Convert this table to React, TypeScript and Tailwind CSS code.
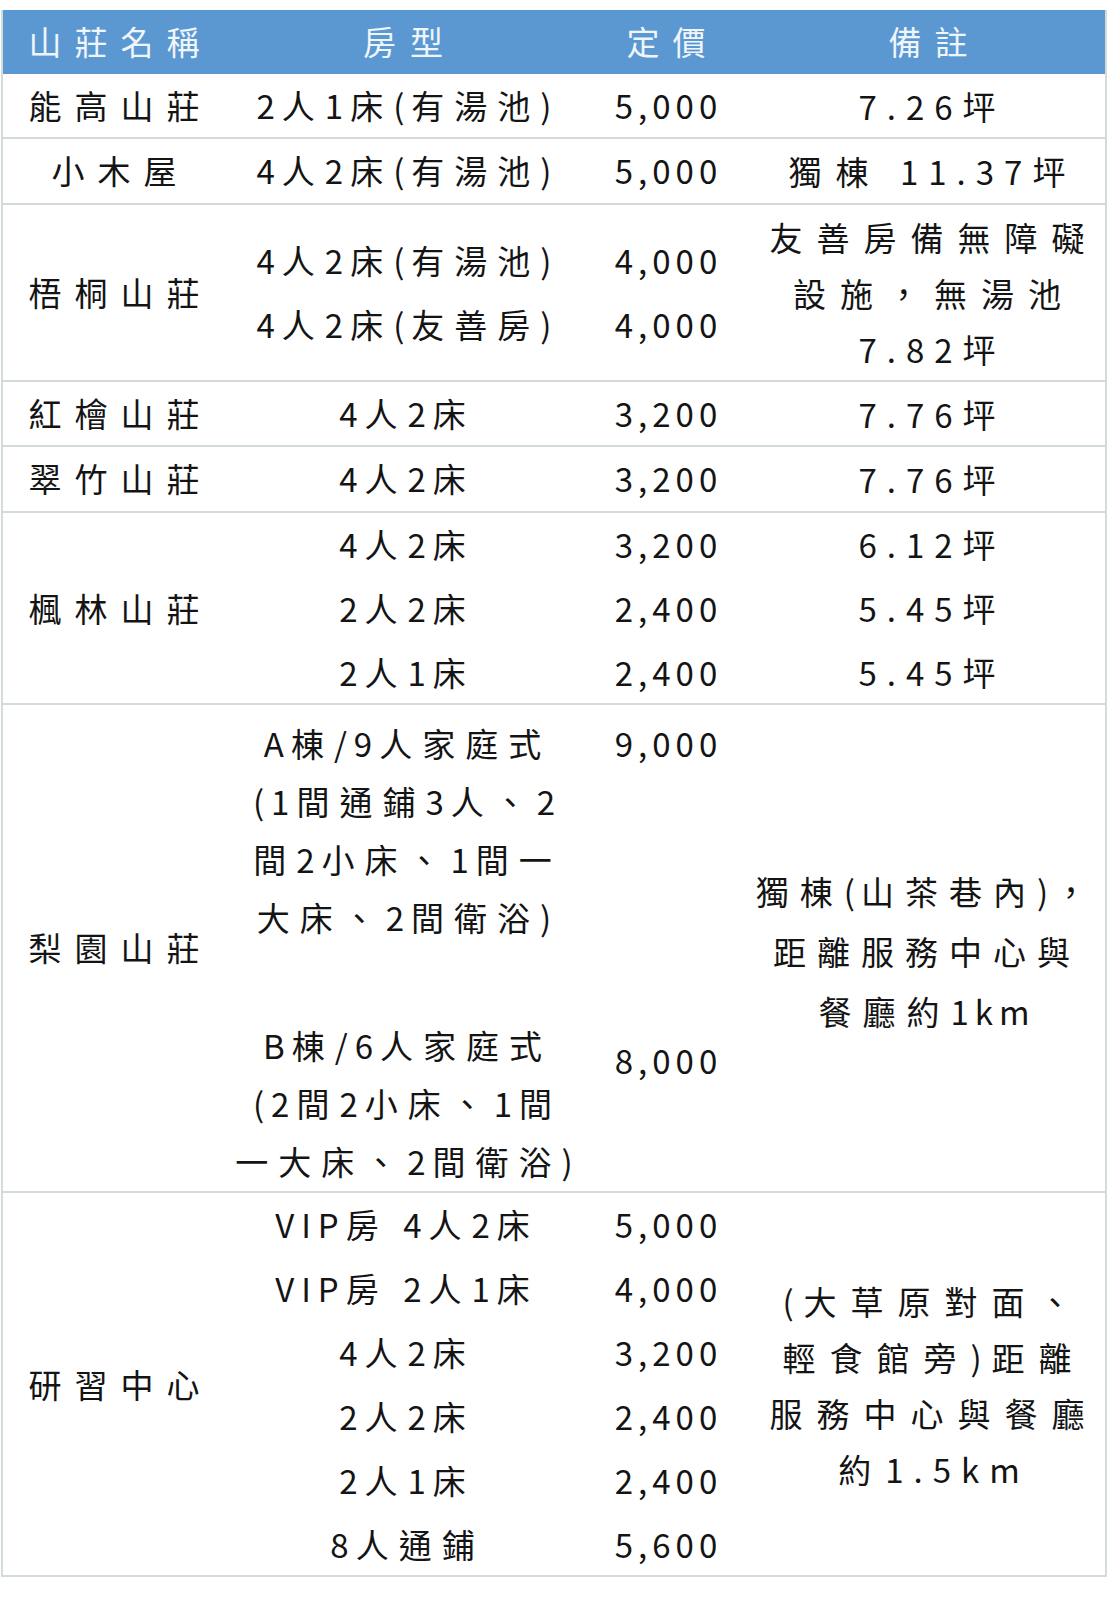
import React from "react";

const font = { fontFamily: '"Noto Sans CJK TC", "Noto Sans", sans-serif' };

// splits a string into ascii / cjk runs so each can get its own letter spacing
function Txt({ s, cjk, ascii }: { s: string; cjk: string; ascii: string }) {
  const parts = s.split(/([\x00-\x7F]+)/).filter(Boolean);
  return (
    <>
      {parts.map((p, i) => (
        <span key={i} className={/^[\x00-\x7F]+$/.test(p) ? ascii : cjk}>
          {p}
        </span>
      ))}
    </>
  );
}

type Line = { type: string; price: string };

function RoomType({ s, extra = "" }: { s: string; extra?: string }) {
  return (
    <div className={`text-center whitespace-pre pl-[9px] ${extra}`}>
      <Txt s={s} cjk="tracking-[10px]" ascii="tracking-[7px]" />
    </div>
  );
}

function Price({ s, extra = "" }: { s: string; extra?: string }) {
  return <div className={`text-center tracking-[5px] pl-[5px] ${extra}`}>{s}</div>;
}

function PriceRow({ type, price }: Line) {
  return (
    <div className="grid grid-cols-[356px_170px] h-[64px] items-center">
      <RoomType s={type} />
      <Price s={price} />
    </div>
  );
}

function Name({ children }: { children: React.ReactNode }) {
  return (
    <div className="flex items-center justify-center tracking-[13px] pl-[13px]">{children}</div>
  );
}

function NoteLine({ s, tight = false }: { s: string; tight?: boolean }) {
  return (
    <div className={`whitespace-pre ${tight ? "pl-[10px]" : "pl-[12px]"}`}>
      <Txt
        s={s}
        cjk={tight ? "tracking-[11px]" : "tracking-[14px]"}
        ascii={tight ? "tracking-[6px]" : "tracking-[10px]"}
      />
    </div>
  );
}

function Note({ lines }: { lines: string[] }) {
  return (
    <div className="flex flex-col items-center justify-center leading-[56px] min-w-0">
      {lines.map((l, i) => (
        <NoteLine key={i} s={l} />
      ))}
    </div>
  );
}

function Section({
  name,
  rows,
  note,
  h,
}: {
  name: string;
  rows: Line[];
  note: string[];
  h: string;
}) {
  return (
    <div className={`grid grid-cols-[222px_526px_minmax(0,1fr)] border-b-2 border-[#d3dadb] ${h}`}>
      <Name>{name}</Name>
      <div className="flex flex-col justify-center">
        {rows.map((r, i) => (
          <PriceRow key={i} {...r} />
        ))}
      </div>
      <Note lines={note} />
    </div>
  );
}

export default function App() {
  return (
    <div className="w-[1109px] h-[1600px] bg-white pt-[10px] text-[#141414] text-[33px]" style={font}>
      <div className="ml-[1px] w-[1106px] border-x-2 border-[#d3dcd9]">
        {/* header */}
        <div className="grid grid-cols-[222px_356px_170px_minmax(0,1fr)] h-[64px] items-center bg-[#5b97d1] text-[#eef5fb]">
          <div className="text-center tracking-[13px] pl-[13px]">山莊名稱</div>
          <div className="text-center tracking-[14px] pl-[14px]">房型</div>
          <div className="text-center tracking-[13px] pl-[13px]">定價</div>
          <div className="text-center tracking-[13px] pl-[13px]">備註</div>
        </div>

        <Section h="h-[65px]" name="能高山莊" rows={[{ type: "2人1床(有湯池)", price: "5,000" }]} note={["7.26坪"]} />
        <Section h="h-[66px]" name="小木屋" rows={[{ type: "4人2床(有湯池)", price: "5,000" }]} note={["獨棟 11.37坪"]} />
        <Section
          h="h-[177px]"
          name="梧桐山莊"
          rows={[
            { type: "4人2床(有湯池)", price: "4,000" },
            { type: "4人2床(友善房)", price: "4,000" },
          ]}
          note={["友善房備無障礙", "設施，無湯池", "7.82坪"]}
        />
        <Section h="h-[65px]" name="紅檜山莊" rows={[{ type: "4人2床", price: "3,200" }]} note={["7.76坪"]} />
        <Section h="h-[66px]" name="翠竹山莊" rows={[{ type: "4人2床", price: "3,200" }]} note={["7.76坪"]} />

        {/* 楓林山莊: one note per row */}
        <div className="grid grid-cols-[222px_minmax(0,1fr)] h-[192px] border-b-2 border-[#d3dadb]">
          <Name>楓林山莊</Name>
          <div className="flex flex-col justify-center">
            {[
              ["4人2床", "3,200", "6.12坪"],
              ["2人2床", "2,400", "5.45坪"],
              ["2人1床", "2,400", "5.45坪"],
            ].map(([t, p, n]) => (
              <div key={t + n} className="grid grid-cols-[356px_170px_minmax(0,1fr)] h-[64px] items-center">
                <RoomType s={t} />
                <Price s={p} />
                <div className="flex justify-center">
                  <NoteLine s={n} />
                </div>
              </div>
            ))}
          </div>
        </div>

        {/* 梨園山莊 */}
        <div className="grid grid-cols-[222px_526px_minmax(0,1fr)] h-[488px] border-b-2 border-[#d3dadb]">
          <Name>梨園山莊</Name>
          <div className="flex flex-col pt-[9px]">
            <div className="grid grid-cols-[356px_170px] leading-[58px]">
              <div className="flex flex-col items-center">
                <RoomType s="A棟/9人家庭式" />
                <RoomType s="(1間通鋪3人、2" />
                <RoomType s="間2小床、1間一" />
                <RoomType s="大床、2間衛浴)" />
              </div>
              <Price s="9,000" />
            </div>
            <div className="grid grid-cols-[356px_170px] leading-[58px] mt-[70px]">
              <div className="flex flex-col items-center">
                <RoomType s="B棟/6人家庭式" />
                <RoomType s="(2間2小床、1間" />
                <RoomType s="一大床、2間衛浴)" />
              </div>
              <Price s="8,000" extra="pt-[15px]" />
            </div>
          </div>
          <div className="flex flex-col items-center justify-center pt-[6px] pr-[12px] leading-[60px] min-w-0">
            <NoteLine tight s="獨棟(山茶巷內)，" />
            <NoteLine tight s="距離服務中心與" />
            <NoteLine tight s="餐廳約1km" />
          </div>
        </div>

        <Section
          h="h-[384px]"
          name="研習中心"
          rows={[
            { type: "VIP房 4人2床", price: "5,000" },
            { type: "VIP房 2人1床", price: "4,000" },
            { type: "4人2床", price: "3,200" },
            { type: "2人2床", price: "2,400" },
            { type: "2人1床", price: "2,400" },
            { type: "8人通鋪", price: "5,600" },
          ]}
          note={["(大草原對面、", "輕食館旁)距離", "服務中心與餐廳", "約1.5km"]}
        />
      </div>
    </div>
  );
}
